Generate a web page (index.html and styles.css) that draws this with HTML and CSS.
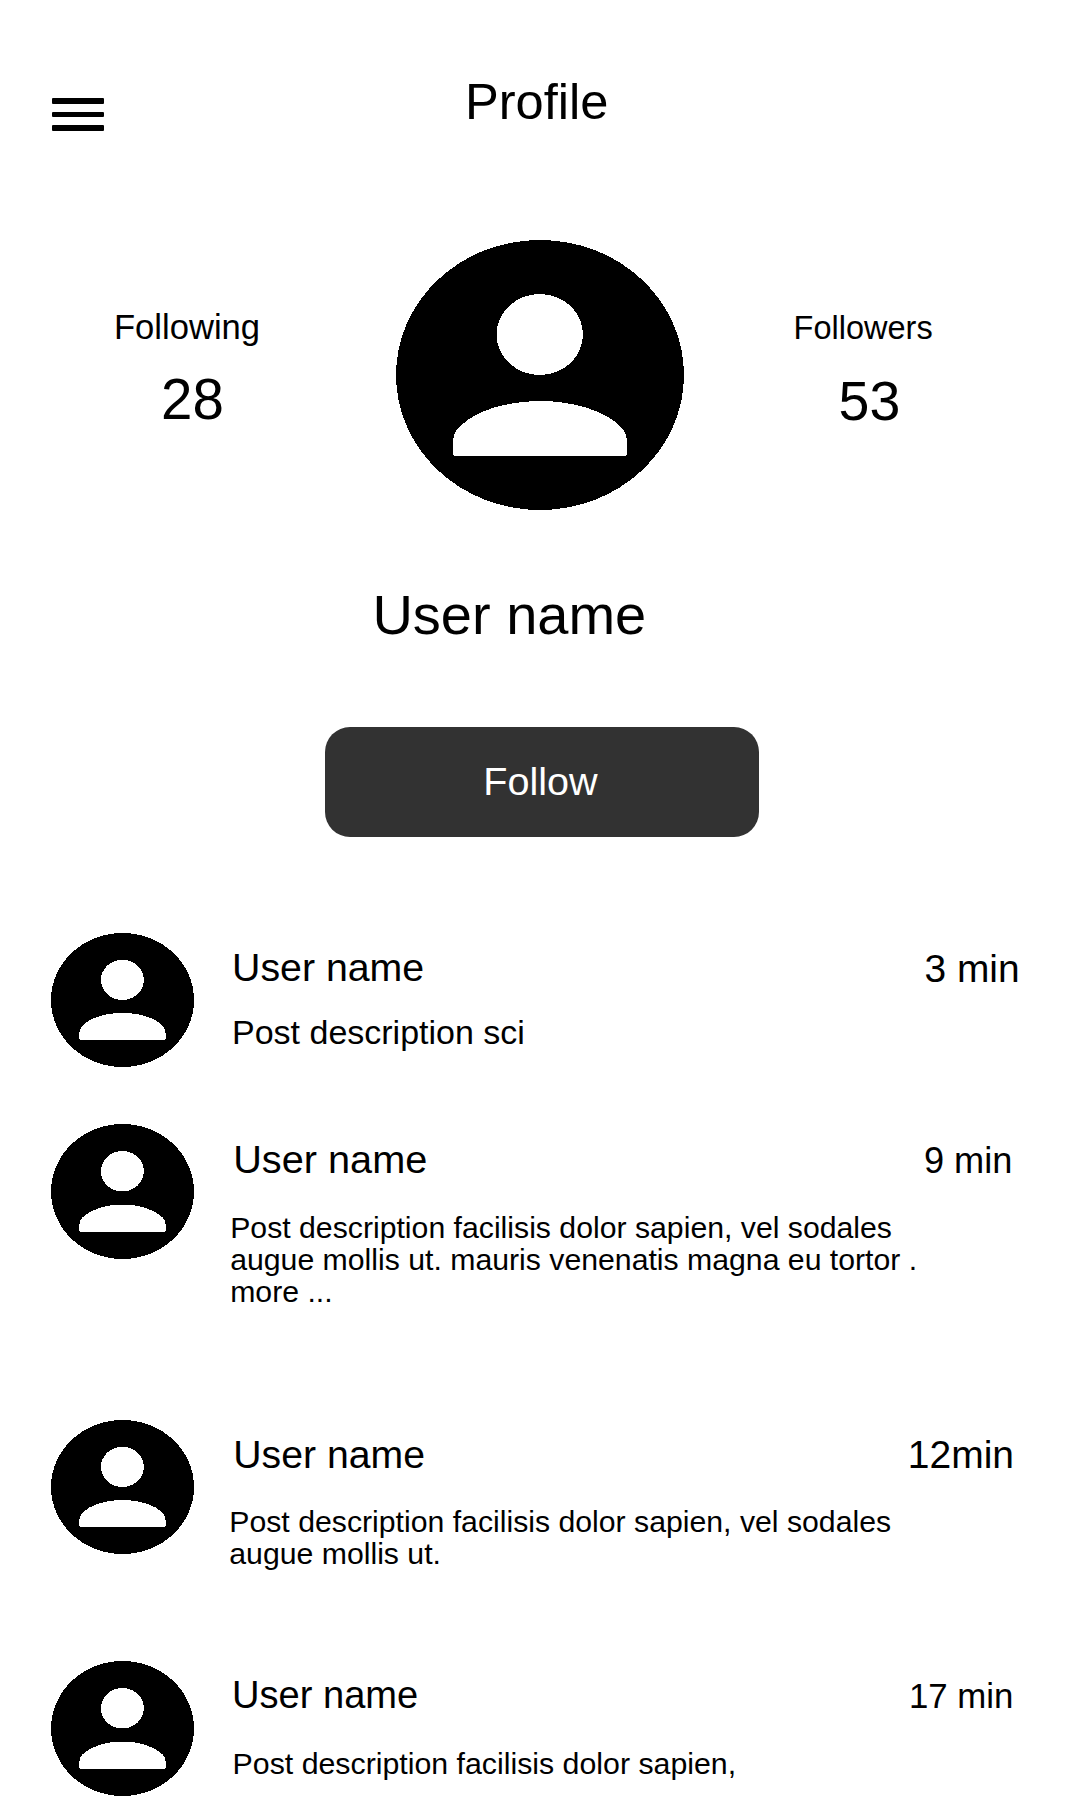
FILE: index.html
```html
<!DOCTYPE html>
<html lang="en">
<head>
<meta charset="utf-8">
<title>Profile</title>
<link rel="stylesheet" href="styles.css">
</head>
<body>
<svg class="symbols" aria-hidden="true">
  <symbol id="person" viewBox="0 0 288 270" preserveAspectRatio="none">
    <ellipse cx="144" cy="135" rx="144" ry="135" fill="#000"/>
    <ellipse cx="143.8" cy="94.5" rx="43.2" ry="40.5" fill="#fff"/>
    <path fill="#fff" d="M57 204C57 197 58 193 62 188C79 170 112 161 144 161S209 170 226 188C230 193 231 197 231 204V213Q231 216 228 216H60Q57 216 57 213Z"/>
  </symbol>
</svg>
<div class="page">
  <header class="header">
    <button class="menu" aria-label="Menu"><span class="bar"></span><span class="bar bar-mid"></span><span class="bar"></span></button>
    <h1 class="title">Profile</h1>
  </header>

  <section class="summary">
    <div class="stat following">
      <span class="stat-label">Following</span>
      <span class="stat-value">28</span>
    </div>
    <svg class="portrait"><use href="#person"/></svg>
    <div class="stat followers">
      <span class="stat-label">Followers</span>
      <span class="stat-value">53</span>
    </div>
  </section>

  <h2 class="user">User name</h2>
  <button class="follow">Follow</button>

  <main class="posts">
    <article class="post post-1">
      <svg class="avatar"><use href="#person"/></svg>
      <div class="body">
        <h3 class="name">User name</h3>
        <p class="text">Post description sci</p>
      </div>
      <time class="time">3 min</time>
    </article>
    <article class="post post-2">
      <svg class="avatar"><use href="#person"/></svg>
      <div class="body">
        <h3 class="name">User name</h3>
        <p class="text">Post description facilisis dolor sapien, vel sodales<br>augue mollis ut. mauris venenatis magna eu tortor .<br>more ...</p>
      </div>
      <time class="time">9 min</time>
    </article>
    <article class="post post-3">
      <svg class="avatar"><use href="#person"/></svg>
      <div class="body">
        <h3 class="name">User name</h3>
        <p class="text">Post description facilisis dolor sapien, vel sodales<br>augue mollis ut.</p>
      </div>
      <time class="time">12min</time>
    </article>
    <article class="post post-4">
      <svg class="avatar"><use href="#person"/></svg>
      <div class="body">
        <h3 class="name">User name</h3>
        <p class="text">Post description facilisis dolor sapien,</p>
      </div>
      <time class="time">17 min</time>
    </article>
  </main>
</div>
</body>
</html>
```

FILE: styles.css
```css
* { box-sizing: border-box; }

body {
  margin: 0;
  background: #fff;
  color: #000;
  font-family: "Liberation Sans", Arial, sans-serif;
}

h1, h2, h3, p { margin: 0; font-weight: 400; }

button { border: 0; padding: 0; font-family: inherit; }

.symbols { display: none; }

.page {
  width: 1080px;
  height: 1800px;
  overflow: hidden;
}

/* Header */
.header {
  display: flex;
  align-items: flex-start;
  height: 240px;
  padding: 73px 0 0 52px;
}

.menu {
  display: flex;
  flex-direction: column;
  justify-content: space-between;
  width: 52px;
  height: 33px;
  margin-top: 25px;
  background: none;
}

.bar { width: 52px; height: 6px; border-radius: 1px; background: #000; }
.bar-mid { height: 5px; }

.title { margin-left: 361px; font-size: 50.6px; line-height: 57px; }

/* Portrait and counters */
.summary {
  display: grid;
  grid-template-columns: 396px 288px 396px;
  height: 270px;
}

.portrait { width: 288px; height: 270px; }
.portrait, .avatar { display: block; flex: none; shape-rendering: crispEdges; }

.stat { display: flex; flex-direction: column; align-items: flex-start; }

.following { padding: 68px 0 0 114px; }
.following .stat-label { font-size: 34.6px; line-height: 39px; }
.following .stat-value { margin: 21px 0 0 47px; font-size: 56.5px; line-height: 63px; }

.followers { padding: 70px 0 0 109.6px; }
.followers .stat-label { font-size: 32.5px; line-height: 37px; }
.followers .stat-value { margin: 23px 0 0 45px; font-size: 55.5px; line-height: 62px; }

.user {
  margin: 73px 0 0 372.4px;
  font-size: 56px;
  line-height: 63px;
}

.follow {
  display: block;
  width: 434px;
  height: 110px;
  margin: 81px 0 0 325px;
  padding: 0 3px 2px 0;
  border-radius: 25px;
  background: #323232;
  color: #fff;
  font-size: 39.6px;
  line-height: 44px;
}

/* Posts */
.posts { padding: 96px 0 0 51px; }

.post { display: flex; align-items: flex-start; }

.avatar { width: 143px; height: 134px; }

.body { margin: 12px 0 0 38px; }
.name { font-size: 39.3px; line-height: 44px; white-space: nowrap; }
.text { font-size: 30.22px; line-height: 32px; white-space: nowrap; }
.time { margin-left: auto; line-height: 44px; white-space: nowrap; }

.post-1 { height: 191px; }
.post-1 .text { margin-top: 24px; font-size: 34px; line-height: 38px; }
.post-1 .time { margin-top: 14px; margin-right: 60.4px; font-size: 38.9px; }

.post-2 { height: 296px; }
.post-2 .avatar, .post-4 .avatar { height: 135px; }
.post-2 .body { margin-top: 13px; margin-left: 36.2px; }
.post-2 .name { padding-left: 3px; font-size: 39.7px; }
.post-2 .text { margin-top: 31px; }
.post-2 .time { margin-top: 16px; margin-right: 67.6px; font-size: 36.2px; line-height: 41px; }

.post-3 { height: 241px; }
.post-3 .body { margin-top: 13px; margin-left: 35.3px; }
.post-3 .name { padding-left: 4px; font-size: 39.2px; }
.post-3 .text { margin-top: 29px; }
.post-3 .time { margin-top: 13px; margin-right: 66px; font-size: 39px; }

.post-4 .body { margin-top: 13px; }
.post-4 .name { font-size: 38.1px; line-height: 43px; }
.post-4 .text { margin-top: 30px; padding-left: 0.6px; font-size: 30.3px; line-height: 34px; }
.post-4 .time { margin-top: 15px; margin-right: 66.6px; font-size: 34.8px; line-height: 39px; }
```
